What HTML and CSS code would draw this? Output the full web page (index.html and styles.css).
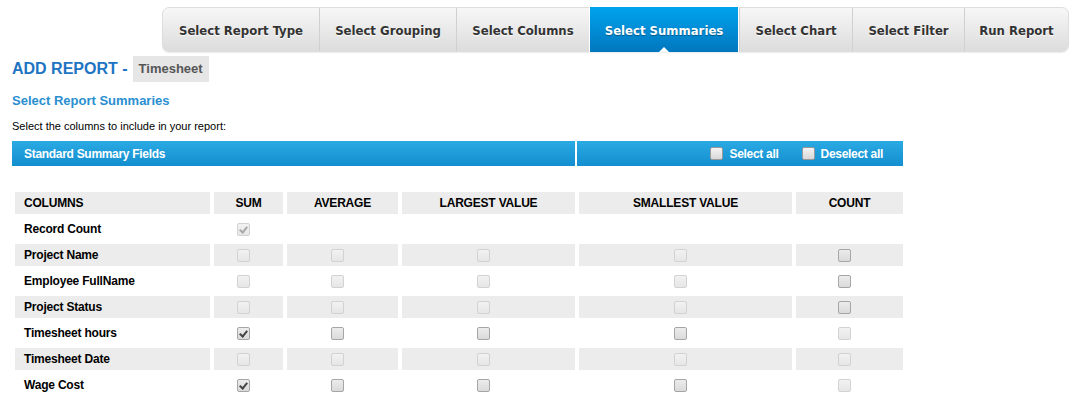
FILE: index.html
```html
<!DOCTYPE html>
<html lang="en">
<head>
    <meta charset="UTF-8">
    <title>Add Report - Select Summaries</title>
    <link rel="stylesheet" href="styles.css">
</head>
<body>
    <div class="steps-wrap">
        <ul class="steps">
            <li>Select Report Type</li>
            <li>Select Grouping</li>
            <li>Select Columns</li>
            <li class="active">Select Summaries</li>
            <li>Select Chart</li>
            <li>Select Filter</li>
            <li>Run Report</li>
        </ul>
    </div>

    <div class="page">
        <h1 class="title">ADD REPORT - <span class="module">Timesheet</span></h1>
        <h2 class="subtitle">Select Report Summaries</h2>
        <p class="hint">Select the columns to include in your report:</p>

        <table class="bar">
            <tr>
                <td class="bar-title">Standard Summary Fields</td>
                <td class="bar-tools">
                    <label><input type="checkbox" class="cb">Select all</label>
                    <label><input type="checkbox" class="cb">Deselect all</label>
                </td>
            </tr>
        </table>

        <table class="summary">
            <thead>
                <tr>
                    <th class="name">COLUMNS</th>
                    <th class="c-sum">SUM</th>
                    <th class="c-avg">AVERAGE</th>
                    <th class="c-max">LARGEST VALUE</th>
                    <th class="c-min">SMALLEST VALUE</th>
                    <th class="c-cnt">COUNT</th>
                </tr>
            </thead>
            <tbody>
                <tr>
                    <td class="name">Record Count</td>
                    <td class="box"><input type="checkbox" class="cb" checked disabled></td>
                    <td></td>
                    <td></td>
                    <td></td>
                    <td></td>
                </tr>
                <tr>
                    <td class="name">Project Name</td>
                    <td class="box"><input type="checkbox" class="cb" disabled></td>
                    <td class="box"><input type="checkbox" class="cb" disabled></td>
                    <td class="box"><input type="checkbox" class="cb" disabled></td>
                    <td class="box"><input type="checkbox" class="cb" disabled></td>
                    <td class="box"><input type="checkbox" class="cb"></td>
                </tr>
                <tr>
                    <td class="name">Employee FullName</td>
                    <td class="box"><input type="checkbox" class="cb" disabled></td>
                    <td class="box"><input type="checkbox" class="cb" disabled></td>
                    <td class="box"><input type="checkbox" class="cb" disabled></td>
                    <td class="box"><input type="checkbox" class="cb" disabled></td>
                    <td class="box"><input type="checkbox" class="cb"></td>
                </tr>
                <tr>
                    <td class="name">Project Status</td>
                    <td class="box"><input type="checkbox" class="cb" disabled></td>
                    <td class="box"><input type="checkbox" class="cb" disabled></td>
                    <td class="box"><input type="checkbox" class="cb" disabled></td>
                    <td class="box"><input type="checkbox" class="cb" disabled></td>
                    <td class="box"><input type="checkbox" class="cb"></td>
                </tr>
                <tr>
                    <td class="name">Timesheet hours</td>
                    <td class="box"><input type="checkbox" class="cb" checked></td>
                    <td class="box"><input type="checkbox" class="cb"></td>
                    <td class="box"><input type="checkbox" class="cb"></td>
                    <td class="box"><input type="checkbox" class="cb"></td>
                    <td class="box"><input type="checkbox" class="cb" disabled></td>
                </tr>
                <tr>
                    <td class="name">Timesheet Date</td>
                    <td class="box"><input type="checkbox" class="cb" disabled></td>
                    <td class="box"><input type="checkbox" class="cb" disabled></td>
                    <td class="box"><input type="checkbox" class="cb" disabled></td>
                    <td class="box"><input type="checkbox" class="cb" disabled></td>
                    <td class="box"><input type="checkbox" class="cb" disabled></td>
                </tr>
                <tr>
                    <td class="name">Wage Cost</td>
                    <td class="box"><input type="checkbox" class="cb" checked></td>
                    <td class="box"><input type="checkbox" class="cb"></td>
                    <td class="box"><input type="checkbox" class="cb"></td>
                    <td class="box"><input type="checkbox" class="cb"></td>
                    <td class="box"><input type="checkbox" class="cb" disabled></td>
                </tr>
            </tbody>
        </table>
    </div>
</body>
</html>
```

FILE: styles.css
```css
* {
    margin: 0;
    padding: 0;
    box-sizing: border-box;
}

body {
    background: #fff;
    font-family: "Liberation Sans", Arial, sans-serif;
    color: #000;
}

/* wizard steps */
.steps-wrap {
    display: flex;
    padding: 7px 0 0 162px;
}

.steps {
    display: flex;
    list-style: none;
    height: 45px;
    border: 1px solid #dedede;
    border-radius: 7px;
    background: linear-gradient(#f7f7f7, #dcdcdc);
    box-shadow: 0 1px 1px rgba(0, 0, 0, 0.08);
}

.steps li {
    position: relative;
    display: flex;
    align-items: center;
    justify-content: center;
    padding: 1px 6px 0;
    border-left: 1px solid #d0d0d0;
    font-family: "DejaVu Sans Condensed", "DejaVu Sans", sans-serif;
    font-weight: bold;
    font-size: 13px;
    color: #333;
    text-shadow: 0 1px 1px #fff;
    white-space: nowrap;
}

.steps li:first-child {
    border-left: none;
}

.steps li:nth-child(1) { width: 156px; }
.steps li:nth-child(2) { width: 137px; }
.steps li:nth-child(3) { width: 133px; }
.steps li:nth-child(4) { width: 150px; }
.steps li:nth-child(5) { width: 113px; }
.steps li:nth-child(6) { width: 112px; }
.steps li:nth-child(7) { width: 104px; }

.steps li.active {
    margin: -1px 0;
    border-left: 1px solid #fff;
    border-right: 1px solid #fff;
    background: linear-gradient(#00a3ee, #0077be);
    color: #fff;
    text-shadow: 0 1px 1px rgba(0, 0, 0, 0.35);
}

.steps li.active::after {
    content: "";
    position: absolute;
    left: 50%;
    bottom: 0;
    margin-left: -5px;
    border: 5px solid transparent;
    border-top: none;
    border-bottom-color: #fff;
}

/* page body */
.page {
    padding: 4px 0 0 12px;
}

.title {
    display: flex;
    align-items: center;
    font-size: 16px;
    font-weight: bold;
    color: #1d74c2;
    height: 26px;
}

.module {
    margin-left: 5px;
    padding: 0 6px;
    height: 26px;
    line-height: 26px;
    background: #e6e6e6;
    color: #555;
    font-size: 13px;
}

.subtitle {
    margin-top: 11px;
    font-size: 13px;
    color: #2a8fd0;
    line-height: 16px;
}

.hint {
    margin-top: 11px;
    font-size: 11px;
    line-height: 13px;
}

/* blue section bar */
.bar {
    margin: 8px 0 0 -2px;
    border-spacing: 2px 0;
    width: 895px;
}

.bar td {
    height: 25px;
    padding: 0;
    background: linear-gradient(#2aaae3, #138ecf);
    color: #fff;
    font-size: 12px;
    font-weight: bold;
    letter-spacing: -0.3px;
}

.bar-title {
    width: 563px;
    padding-left: 12px !important;
}

.bar-tools {
    text-align: right;
    padding-right: 20px !important;
}

.bar-tools label {
    margin-left: 20px;
}

.bar-tools .cb {
    margin: -2px 6px 0 0;
    border-color: #9a9a9a;
    background: linear-gradient(#f4f4f4, #d8d8d8);
}

/* summary table */
.summary {
    margin: 22px 0 0 -1px;
    border-spacing: 4px;
    font-size: 12px;
    letter-spacing: -0.2px;
}

.summary th,
.summary td {
    height: 22px;
    padding: 0;
    font-weight: bold;
    text-align: center;
    vertical-align: middle;
}

.summary th {
    background: #ececec;
}

.summary tbody tr:nth-child(even) td {
    background: #ececec;
}

.summary .name {
    text-align: left;
    padding-left: 9px;
}

.summary .box {
    padding-right: 11px;
    line-height: 0;
}

.c-sum { width: 69px; }
.c-avg { width: 111px; }
.c-max { width: 173px; }
.c-min { width: 213px; }
.c-cnt { width: 107px; }
.summary th.name { width: 195px; }

/* checkboxes */
.cb {
    appearance: none;
    -webkit-appearance: none;
    position: relative;
    display: inline-block;
    width: 13px;
    height: 13px;
    vertical-align: middle;
    border: 1px solid #a6a6a6;
    border-radius: 2px;
    background: linear-gradient(#ececec, #dadada);
}

.cb:disabled {
    border-color: #d2d2d2;
    background: linear-gradient(#f2f2f2, #e6e6e6);
}

.cb:checked::after {
    content: "";
    position: absolute;
    left: 3px;
    top: 1px;
    width: 3px;
    height: 6px;
    border: solid #444;
    border-width: 0 2px 2px 0;
    transform: rotate(40deg);
}

.cb:checked:disabled::after {
    border-color: #a8a8a8;
}
```
